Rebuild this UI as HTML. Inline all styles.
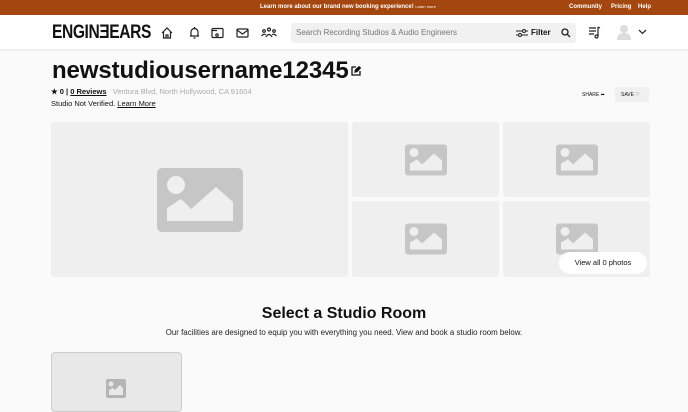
<!DOCTYPE html>
<html><head><style>
*{margin:0;padding:0;box-sizing:border-box}
body{width:688px;height:406px;overflow:hidden;background:#fafafa;font-family:"Liberation Sans",sans-serif;color:#111;position:relative}
.a{position:absolute}
.top{left:0;top:0;width:688px;height:15px;background:#a3460f;color:#fff;font-size:6px;font-weight:bold}
.nav{left:0;top:15px;width:688px;height:36px;background:#fff;border-bottom:2px solid #eee}
.tile{background:#efefef;border-radius:3px}
.ph{position:absolute;left:50%;top:50%;transform:translate(-50%,-50%)}
</style></head><body>
<div class="a top">
<span class="a" style="left:260px;top:4px">Learn more about our brand new booking experience! <span style="font-size:4px;font-weight:normal">Learn more</span></span>
<span class="a" style="left:569px;top:4px">Community</span>
<span class="a" style="left:611px;top:4px">Pricing</span>
<span class="a" style="left:638px;top:4px">Help</span>
</div>
<div class="a nav">
<div class="a" style="left:52px;top:7px;font-size:19px;font-weight:bold;letter-spacing:-0.5px;transform:scaleX(0.82);transform-origin:left;font-family:'Liberation Sans Narrow','Liberation Sans',sans-serif">ENGIN&#398;EARS</div>
<svg class="a" style="left:160px;top:11px" width="120" height="14" fill="none" stroke="#222" stroke-width="1.2">
<path d="M2 7 L7 2 L12 7 M3.5 6 V12 H10.5 V6 M6 12 V9 H8 V12"/>
<path d="M30 10 H39 M31 10 V6 A3.5 3.5 0 0 1 38 6 V10 M33.5 12 H35.5 M34.5 1 V2.5"/>
<rect x="52" y="2.5" width="11" height="9" rx="1"/><path d="M52 4.5 H57"/><circle cx="57" cy="9" r="1.2"/>
<rect x="77" y="3" width="11" height="8" rx="1"/><path d="M77 4 L82.5 8 L88 4"/>
<circle cx="109" cy="3.5" r="1.5"/><circle cx="104" cy="5" r="1.3"/><circle cx="114" cy="5" r="1.3"/><path d="M106 11 Q109 6 112 11 M101.5 10 Q104 7 106 9 M112 9 Q114 7 116.5 10"/>
</svg>
<div class="a" style="left:291px;top:8px;width:285px;height:20px;background:#f1f1f1;border-radius:3px">
<span class="a" style="left:5px;top:5px;font-size:8px;color:#777">Search Recording Studios &amp; Audio Engineers</span>
<svg class="a" style="left:225px;top:5px" width="12" height="10" stroke="#222" fill="none" stroke-width="1"><path d="M0 3 H12 M0 7 H12"/><circle cx="8" cy="3" r="1.5" fill="#f1f1f1"/><circle cx="4" cy="7" r="1.5" fill="#f1f1f1"/></svg>
<span class="a" style="left:240px;top:5px;font-size:8px;font-weight:bold">Filter</span>
<svg class="a" style="left:270px;top:5px" width="10" height="10" stroke="#222" fill="none" stroke-width="1.3"><circle cx="4" cy="4" r="3"/><path d="M6.3 6.3 L9 9"/></svg>
</div>
<svg class="a" style="left:588px;top:11px" width="14" height="14" stroke="#222" fill="none" stroke-width="1.2"><path d="M1 2 H8 M1 5 H8 M1 8 H6 M10 1 V10"/><circle cx="8.5" cy="10.5" r="1.5"/><path d="M10 1 L12 2"/></svg>
<svg class="a" style="left:616px;top:9px" width="16" height="17" fill="#ddd"><circle cx="8" cy="5" r="4"/><path d="M1 16 Q1 9 8 9 Q15 9 15 16Z"/></svg>
<svg class="a" style="left:638px;top:14px" width="9" height="6" stroke="#333" fill="none" stroke-width="1.3"><path d="M1 1 L4.5 4.5 L8 1"/></svg>
</div>
<div class="a" style="left:52px;top:57px;font-size:24px;font-weight:bold;letter-spacing:-0.1px">newstudiousername12345</div>
<svg class="a" style="left:351px;top:66px" width="10" height="10" stroke="#111" fill="none" stroke-width="1.3"><path d="M5 1 H1 V9 H9 V5"/><path d="M4 6 L4.5 4 L8 0.8 L9.3 2 L6 5.5 Z" fill="#111"/></svg>
<div class="a" style="left:51px;top:87px;font-size:7.5px"><b>★ 0 | <u>0 Reviews</u></b> &nbsp; <span style="color:#aaa">Ventura Blvd, North Hollywood, CA 91604</span></div>
<div class="a" style="left:51px;top:99px;font-size:7.5px">Studio Not Verified. <u>Learn More</u></div>
<div class="a" style="left:582px;top:92px;font-size:5px">SHARE ➦</div>
<div class="a" style="left:615px;top:87px;width:34px;height:15px;background:#f0f0f0;border-radius:2px;font-size:5px;padding:5px 0 0 6px">SAVE ♡</div>
<div class="a tile" style="left:51px;top:122px;width:297px;height:155px"><svg class="ph" width="86" height="64"><rect width="86" height="64" rx="5" fill="#c6c6c6"/><circle cx="19" cy="17" r="9" fill="#efefef"/><path d="M10 53 V40 L24 31 L34 41 L59 19 L76 34 V53Z" fill="#efefef"/></svg></div>
<div class="a tile" style="left:352px;top:122px;width:147px;height:75px"><svg class="ph" width="42" height="31"><rect width="42" height="31" rx="3" fill="#c6c6c6"/><circle cx="9" cy="8" r="4.5" fill="#efefef"/><path d="M5 26 V19 L12 15 L17 20 L29 9 L37 16 V26Z" fill="#efefef"/></svg></div>
<div class="a tile" style="left:503px;top:122px;width:147px;height:75px"><svg class="ph" width="42" height="31"><rect width="42" height="31" rx="3" fill="#c6c6c6"/><circle cx="9" cy="8" r="4.5" fill="#efefef"/><path d="M5 26 V19 L12 15 L17 20 L29 9 L37 16 V26Z" fill="#efefef"/></svg></div>
<div class="a tile" style="left:352px;top:201px;width:147px;height:76px"><svg class="ph" width="42" height="31"><rect width="42" height="31" rx="3" fill="#c6c6c6"/><circle cx="9" cy="8" r="4.5" fill="#efefef"/><path d="M5 26 V19 L12 15 L17 20 L29 9 L37 16 V26Z" fill="#efefef"/></svg></div>
<div class="a tile" style="left:503px;top:201px;width:147px;height:76px"><svg class="ph" width="42" height="31"><rect width="42" height="31" rx="3" fill="#c6c6c6"/><circle cx="9" cy="8" r="4.5" fill="#efefef"/><path d="M5 26 V19 L12 15 L17 20 L29 9 L37 16 V26Z" fill="#efefef"/></svg></div>
<div class="a" style="left:559px;top:252px;width:88px;height:22px;background:#fff;border-radius:11px;font-size:7.5px;text-align:center;line-height:22px">View all 0 photos</div>
<div class="a" style="left:0;top:305px;width:688px;text-align:center;font-size:16px;font-weight:bold">Select a Studio Room</div>
<div class="a" style="left:0;top:328px;width:688px;text-align:center;font-size:7.9px;color:#222">Our facilities are designed to equip you with everything you need. View and book a studio room below.</div>
<div class="a" style="left:51px;top:352px;width:131px;height:60px;background:#e8e8e8;border:1px solid #ccc;border-radius:4px"><svg class="a" style="left:54px;top:26px" width="20" height="19"><rect width="20" height="19" rx="2" fill="#b5b5b5"/><circle cx="5" cy="5" r="2.5" fill="#e8e8e8"/><path d="M3 16 V11 L7 9 L9 11 L14 6 L17 9 V16Z" fill="#e8e8e8"/></svg></div>
</body></html>
